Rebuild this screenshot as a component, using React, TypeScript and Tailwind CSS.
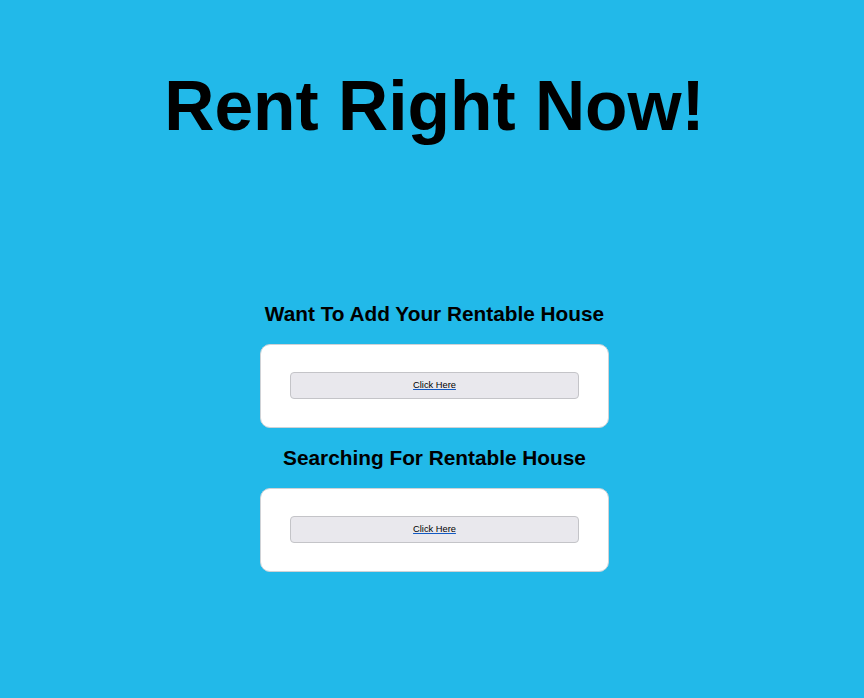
export default function App() {
  const sections = ["Want To Add Your Rentable House", "Searching For Rentable House"];

  return (
    <div
      className="min-h-[698px] w-full bg-[#22b9e9] pl-[5px] text-black"
      style={{ fontFamily: '"Liberation Sans", Arial, sans-serif' }}
    >
      <h1 className="pt-[66px] text-center text-[69.5px] leading-[80px] font-bold">Rent Right Now!</h1>

      <div className="mt-[155px] flex flex-col items-center">
        {sections.map((title, i) => (
          <div key={title} className={`flex flex-col items-center ${i > 0 ? "mt-[17px]" : ""}`}>
            <h2 className="text-center text-[20.8px] leading-[26px] font-bold">{title}</h2>
            <div className="mt-[17px] w-[349px] rounded-[10px] border border-[#cfd2d6] bg-white px-[29px] pt-[27px] pb-[28px]">
              <button className="flex h-[27px] w-full items-center justify-center rounded-[4px] border border-[#c4c4c8] bg-[#e9e8ed] pt-[1px]">
                <a
                  href="#"
                  className="text-[9.3px] leading-none text-black underline decoration-[#1259c3]"
                >
                  Click Here
                </a>
              </button>
            </div>
          </div>
        ))}
      </div>
    </div>
  );
}
